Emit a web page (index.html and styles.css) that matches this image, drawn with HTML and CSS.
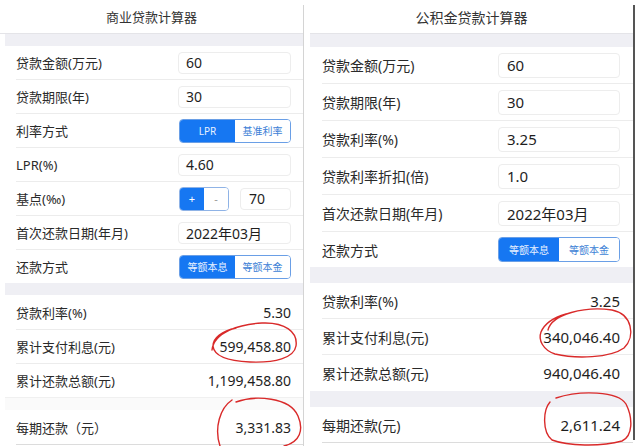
FILE: index.html
```html
<!DOCTYPE html>
<html lang="zh-CN">
<head>
  <meta charset="UTF-8">
  <title>贷款计算器</title>
  <link rel="stylesheet" href="styles.css">
</head>
<body>

  <div class="page">

    <!-- 商业贷款 -->
    <section class="calc calc-biz">
      <div class="calc-title">商业贷款计算器</div>
      <div class="band"></div>

      <div class="row"><span class="label">贷款金额(万元)</span><div class="field">60</div></div>
      <div class="row"><span class="label">贷款期限(年)</span><div class="field">30</div></div>
      <div class="row">
        <span class="label">利率方式</span>
        <div class="seg">
          <span class="seg-item active">LPR</span>
          <span class="seg-item">基准利率</span>
        </div>
      </div>
      <div class="row"><span class="label">LPR(%)</span><div class="field">4.60</div></div>
      <div class="row">
        <span class="label">基点(‰)</span>
        <div class="point-box">
          <div class="stepper">
            <span class="step active">+</span>
            <span class="step">-</span>
          </div>
          <div class="field field-small">70</div>
        </div>
      </div>
      <div class="row"><span class="label">首次还款日期(年月)</span><div class="field">2022年03月</div></div>
      <div class="row last">
        <span class="label">还款方式</span>
        <div class="seg">
          <span class="seg-item active">等额本息</span>
          <span class="seg-item">等额本金</span>
        </div>
      </div>

      <div class="band"></div>

      <div class="row result"><span class="label">贷款利率(%)</span><span class="value">5.30</span></div>
      <div class="row result"><span class="label">累计支付利息(元)</span><span class="value">599,458.80</span></div>
      <div class="row result last"><span class="label">累计还款总额(元)</span><span class="value">1,199,458.80</span></div>
      <div class="band band-light"></div>
      <div class="row result bottom"><span class="label">每期还款（元）</span><span class="value">3,331.83</span></div>
    </section>

    <div class="rule"></div>

    <!-- 公积金贷款 -->
    <section class="calc calc-fund">
      <div class="calc-title">公积金贷款计算器</div>
      <div class="band"></div>

      <div class="row"><span class="label">贷款金额(万元)</span><div class="field">60</div></div>
      <div class="row"><span class="label">贷款期限(年)</span><div class="field">30</div></div>
      <div class="row"><span class="label">贷款利率(%)</span><div class="field">3.25</div></div>
      <div class="row"><span class="label">贷款利率折扣(倍)</span><div class="field">1.0</div></div>
      <div class="row"><span class="label">首次还款日期(年月)</span><div class="field">2022年03月</div></div>
      <div class="row last">
        <span class="label">还款方式</span>
        <div class="seg">
          <span class="seg-item active">等额本息</span>
          <span class="seg-item">等额本金</span>
        </div>
      </div>

      <div class="band"></div>

      <div class="row result"><span class="label">贷款利率(%)</span><span class="value">3.25</span></div>
      <div class="row result"><span class="label">累计支付利息(元)</span><span class="value">340,046.40</span></div>
      <div class="row result last"><span class="label">累计还款总额(元)</span><span class="value">940,046.40</span></div>
      <div class="band"></div>
      <div class="row result bottom"><span class="label">每期还款(元)</span><span class="value">2,611.24</span></div>
    </section>

    <div class="rule rule-dark"></div>

    <!-- 手画的红圈 -->
    <svg class="marks" width="640" height="446" viewBox="0 0 640 446">
      <path d="M212 350 C214 332 240 324 262 323 C285 322 298 332 296 346 C294 358 275 363 250 362 C228 361 214 356 213 346 C213 338 222 331 236 328"/>
      <path d="M236 402 C255 395 290 397 298 416 C304 430 300 442 284 446 M232 400 C220 408 214 428 220 446"/>
      <path d="M548 330 C552 314 585 306 612 310 C632 314 636 336 624 348 C610 358 576 359 555 354 C543 350 538 340 541 332 C544 325 552 318 566 314"/>
      <path d="M556 398 C580 390 618 391 626 404 C633 418 633 436 622 441 C600 447 568 446 552 440 C542 432 543 410 550 402"/>
    </svg>

  </div>

</body>
</html>
```

FILE: styles.css
```css
body {
  margin: 0;
  background-color: #fff;
  font-family: "Noto Sans", "Noto Sans CJK SC", sans-serif;
  color: #2a2a2a;
}

.page {
  position: relative;
  display: flex;
  width: 640px;
  height: 446px;
  overflow: hidden;
}

.calc {
  display: flex;
  flex-direction: column;
  flex-shrink: 0;
}

.calc-title {
  display: flex;
  align-items: center;
  justify-content: center;
  border-bottom: 1px solid #e4e4e8;
  color: #333;
}

.band {
  background-color: #efeff4;
}

.row {
  display: flex;
  align-items: center;
  justify-content: space-between;
  box-sizing: border-box;
  border-bottom: 1px solid #ececec;
}

.row.last {
  border-bottom: none;
}

.row.bottom {
  border-bottom: 1px solid #dcdcdc;
}

.label {
  white-space: nowrap;
}

.field {
  box-sizing: border-box;
  display: flex;
  align-items: center;
  border: 1px solid #ededed;
  border-radius: 4px;
  background-color: #fff;
  color: #1e1e1e;
}

.value {
  color: #1e1e1e;
}

/* segmented control */
.seg {
  display: flex;
  box-sizing: border-box;
  border: 1px solid #6a9fe6;
  border-radius: 4px;
  overflow: hidden;
}

.seg-item {
  flex: 1;
  display: flex;
  align-items: center;
  justify-content: center;
  font-size: 10px;
  color: #3d7fd6;
  background-color: #fff;
}

.seg-item.active {
  background-color: #1677f2;
  color: #e8f1ff;
}

.point-box {
  display: flex;
  align-items: center;
  gap: 11px;
}

.stepper {
  display: flex;
  box-sizing: border-box;
  width: 50px;
  height: 24px;
  border: 1px solid #8fb3e6;
  border-radius: 4px;
  overflow: hidden;
}

.step {
  flex: 1;
  display: flex;
  align-items: center;
  justify-content: center;
  font-size: 11px;
  color: #999;
  background-color: #fff;
}

.step.active {
  background-color: #1677f2;
  color: #fff;
}

/* 商业贷款 */
.calc-biz {
  width: 303px;
}

.calc-biz .calc-title {
  height: 33px;
  font-size: 13px;
}

.calc-biz .band {
  height: 12px;
  margin-left: 5px;
}

.calc-biz .band + .row.result {
  margin-top: 1px;
}

.calc-biz .row {
  height: 34px;
  margin-left: 16px;
  padding-right: 12px;
  font-size: 13px;
}

.calc-biz .row.last {
  height: 33px;
}

.calc-biz .band-light {
  height: 12px;
  background-color: #fafafa;
  border-top: 1px solid #f0f0f0;
}

.calc-biz .field {
  width: 113px;
  height: 22px;
  padding-left: 7px;
  font-size: 14px;
}

.calc-biz .field-small {
  width: 51px;
  padding-left: 8px;
}

.calc-biz .seg {
  width: 112px;
  height: 24px;
}

.calc-biz .value {
  font-size: 14px;
}

/* 公积金贷款 */
.rule {
  width: 1px;
  margin-top: 5px;
  margin-right: 6px;
  background-color: #d4d4d4;
  flex-shrink: 0;
}

.rule-dark {
  width: 2px;
  margin-right: 0;
  margin-bottom: 6px;
  background-color: #555;
}

.calc-fund {
  width: 323px;
}

.calc-fund .calc-title {
  height: 33px;
  font-size: 14px;
}

.calc-fund .band {
  height: 13px;
}

.calc-fund .row {
  height: 37px;
  margin-left: 12px;
  padding-right: 13px;
  font-size: 14px;
}

.calc-fund .row.last {
  height: 35px;
}

.calc-fund .band + .band,
.calc-fund .row.last + .band {
  height: 16px;
}

.calc-fund .row.result {
  height: 36px;
}

.calc-fund .row.result.bottom {
  height: 36px;
}

.calc-fund .field {
  width: 122px;
  height: 25px;
  padding-left: 8px;
  font-size: 15px;
}

.calc-fund .seg {
  width: 122px;
  height: 25px;
}

.calc-fund .value {
  font-size: 15px;
}

/* red circles */
.marks {
  position: absolute;
  left: 0;
  top: 0;
  pointer-events: none;
}

.marks path {
  fill: none;
  stroke: #d92a2a;
  stroke-width: 1.4;
  stroke-linecap: round;
}
```
